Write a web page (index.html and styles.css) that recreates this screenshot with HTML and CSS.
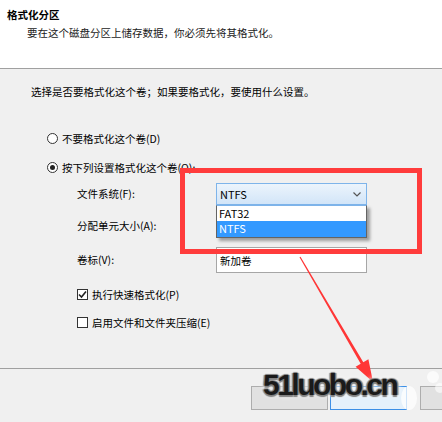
FILE: index.html
```html
<!DOCTYPE html>
<html lang="zh-CN">
<head>
<meta charset="utf-8">
<title>格式化分区</title>
<link rel="stylesheet" href="styles.css">
</head>
<body>
<div class="wizard">
  <header class="head">
    <h1 class="title">格式化分区</h1>
    <p class="subtitle">要在这个磁盘分区上储存数据，你必须先将其格式化。</p>
  </header>
  <main class="main">
    <p class="intro">选择是否要格式化这个卷；如果要格式化，要使用什么设置。</p>
    <div class="radio-row first"><span class="radio"></span><span>不要格式化这个卷(D)</span></div>
    <div class="radio-row second"><span class="radio checked"></span><span>按下列设置格式化这个卷(O):</span></div>
    <div class="form-grid">
      <span class="label">文件系统(F):</span>
      <div class="combo-wrap">
        <div class="combo open">
          <span>NTFS</span>
          <svg class="chev" width="8" height="5" viewBox="0 0 8 5"><path d="M0.5 0.5 L4 4 L7.5 0.5" fill="none" stroke="#555" stroke-width="1.2"/></svg>
        </div>
        <ul class="droplist">
          <li class="opt">FAT32</li>
          <li class="opt sel">NTFS</li>
        </ul>
      </div>
      <span class="label">分配单元大小(A):</span>
      <div class="combo plain"></div>
      <span class="label">卷标(V):</span>
      <div class="textbox">新加卷</div>
    </div>
    <div class="checks">
      <div class="check-row"><span class="checkbox"><svg width="9" height="9" viewBox="0 0 9 9"><path d="M1 4.5 L3.5 7 L8 1.5" fill="none" stroke="#222" stroke-width="1.6"/></svg></span><span>执行快速格式化(P)</span></div>
      <div class="check-row"><span class="checkbox"></span><span>启用文件和文件夹压缩(E)</span></div>
    </div>
  </main>
  <footer class="foot">
    <span class="btn"></span>
    <span class="btn default"></span>
    <span class="btn cancel"></span>
  </footer>
</div>

<div class="redbox"></div>
<svg class="arrow" width="442" height="422" viewBox="0 0 442 422">
  <polygon points="299.5,257.3 360.7,363.8 355.6,366.8 373,382 368.4,359.3 363.3,362.3 300.5,256.7" fill="#ff3636"/>
</svg>
<svg class="blobs" width="442" height="422" viewBox="0 0 442 422">
  <ellipse cx="409" cy="398" rx="8" ry="12" fill="#fff" opacity="0.75"/>
  <ellipse cx="433" cy="377" rx="6" ry="6" fill="#fff" opacity="0.7"/>
  <ellipse cx="440" cy="388" rx="5" ry="5" fill="#fff" opacity="0.6"/>
</svg>
<div class="watermark">51luobo.cn</div>
</body>
</html>
```

FILE: styles.css
```css
html, body {
  margin: 0;
  padding: 0;
}
body {
  width: 442px;
  height: 422px;
  overflow: hidden;
  background: #f0f0f0;
  font-family: "Noto Sans CJK SC", "Microsoft YaHei", sans-serif;
  font-size: 10.5px;
  color: #000;
  position: relative;
}
.wizard {
  display: flex;
  flex-direction: column;
  height: 422px;
  overflow: hidden;
}
.head {
  height: 69px;
  box-sizing: border-box;
  background: #fff;
  border-bottom: 1px solid #a0a0a0;
  padding: 7px 0 0 7px;
}
.title {
  margin: 0;
  font-size: 10.5px;
  font-weight: bold;
  line-height: 16px;
}
.subtitle {
  margin: 2px 0 0 20px;
  line-height: 16px;
  color: #1a1a1a;
}
.main {
  height: 299px;
  box-sizing: border-box;
  padding: 15px 0 0 31px;
}
.intro {
  margin: 0;
  line-height: 16px;
}
.radio-row {
  display: flex;
  align-items: center;
  gap: 4px;
  height: 16px;
  margin-left: 16px;
}
.radio-row.first { margin-top: 30px; }
.radio-row.second { margin-top: 13px; }
.radio {
  width: 11px;
  height: 11px;
  box-sizing: border-box;
  border: 1px solid #333;
  border-radius: 50%;
  background: #fff;
  display: flex;
  align-items: center;
  justify-content: center;
}
.radio.checked::after {
  content: "";
  width: 5px;
  height: 5px;
  border-radius: 50%;
  background: #222;
}
.form-grid {
  display: grid;
  grid-template-columns: 139px 151px;
  grid-template-rows: 22px 22px 26px;
  row-gap: 10px;
  align-items: center;
  margin: 8px 0 0 46px;
}
.label {
  line-height: 16px;
}
.combo-wrap {
  position: relative;
  height: 22px;
}
.combo {
  height: 22px;
  box-sizing: border-box;
  display: flex;
  align-items: center;
  justify-content: space-between;
  padding: 0 5px 0 3px;
  font-size: 11px;
}
.combo.open {
  border: 1px solid #7eb4ea;
  background: linear-gradient(#ecf4fc, #d2e5f8);
}
.combo.plain {
  border: 1px solid #acacac;
  background: #e5e5e5;
}
.chev { display: block; }
.droplist {
  position: absolute;
  left: 0;
  top: 22px;
  width: 151px;
  margin: 0;
  padding: 0;
  list-style: none;
  box-sizing: border-box;
  border: 1px solid #646464;
  border-top-color: #7eb4ea;
  background: #fff;
  box-shadow: 3px 3px 3px rgba(0, 0, 0, 0.35);
  font-size: 11px;
  z-index: 1;
}
.opt {
  height: 15px;
  line-height: 15px;
  padding-left: 2px;
}
.opt.sel {
  background: #3399ff;
  color: #fff;
  height: 16px;
}
.textbox {
  height: 26px;
  box-sizing: border-box;
  border: 1px solid #a6a6a6;
  background: #fff;
  display: flex;
  align-items: center;
  padding-left: 3px;
}
.checks {
  margin: 13px 0 0 46px;
  display: flex;
  flex-direction: column;
  gap: 12px;
}
.check-row {
  display: flex;
  align-items: center;
  gap: 4px;
  height: 16px;
}
.checkbox {
  width: 11px;
  height: 11px;
  box-sizing: border-box;
  border: 1px solid #333;
  background: #fff;
  display: flex;
  align-items: center;
  justify-content: center;
}
.checkbox svg { display: block; }
.foot {
  flex: 1;
  border-top: 1px solid #a0a0a0;
  display: flex;
  align-items: flex-start;
  padding: 17px 0 0 251px;
  gap: 2px;
  overflow: hidden;
}
.btn {
  flex-shrink: 0;
  width: 77px;
  height: 24px;
  box-sizing: border-box;
  border: 1px solid #adadad;
  background: #e1e1e1;
}
.btn.default {
  border-color: #3c8fe6;
  background: #e5f1fb;
}
.btn.cancel {
  width: 40px;
  margin-left: 11px;
}
.redbox {
  position: absolute;
  left: 180px;
  top: 168px;
  width: 242px;
  height: 86px;
  box-sizing: border-box;
  border: 5px solid #ff3c3c;
}
.arrow, .blobs {
  position: absolute;
  left: 0;
  top: 0;
}
.watermark {
  position: absolute;
  left: 263px;
  top: 368px;
  font-family: "Liberation Sans", Arial, sans-serif;
  font-size: 30px;
  font-weight: bold;
  letter-spacing: -2.5px;
  color: #1a1a1a;
  text-shadow: 1.5px 0 1px #808080, -1.5px 0 1px #808080, 0 1.5px 1px #808080, 0 -1.5px 1px #808080, 0 0 4px #f4f4f4, 0 0 6px #fff;
}
```
